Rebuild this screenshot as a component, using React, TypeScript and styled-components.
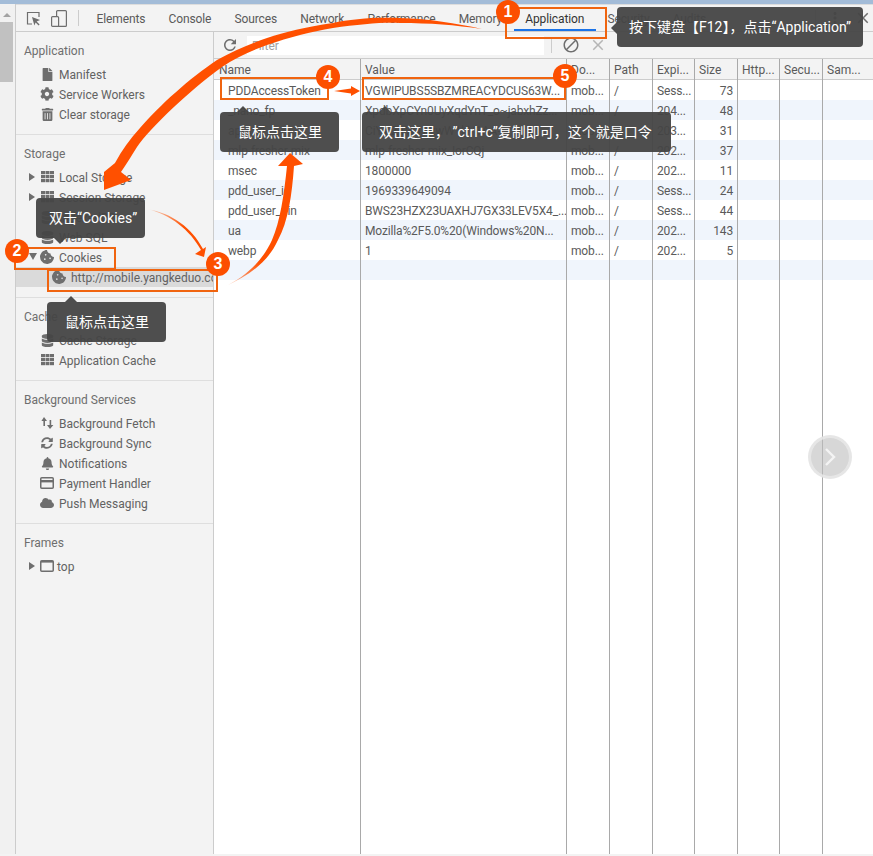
import React from "react";
import styled, { createGlobalStyle, css } from "styled-components";
import {
  FaBell,
  FaCloud,
  FaCog,
  FaCookieBite,
  FaDatabase,
  FaFile,
  FaSyncAlt,
  FaTrashAlt,
} from "react-icons/fa";
import { MdBlock, MdClose, MdMoreVert, MdRefresh } from "react-icons/md";

const GlobalStyle = createGlobalStyle`
  html, body {
    margin: 0;
    padding: 0;
    background: #f3f3f3;
    overflow: hidden;
  }
  * { box-sizing: border-box; }
`;

const Page = styled.div`
  position: relative;
  width: 873px;
  height: 856px;
  display: flex;
  flex-direction: column;
  background: #f3f3f3;
  font-family: Roboto, "Open Sans", sans-serif;
  font-size: 12px;
  color: #5a5a5a;
  overflow: hidden;
`;

const TitleStripe = styled.div`
  flex: 0 0 4px;
  background: #a3bcd8;
`;

const Body = styled.div`
  flex: 0 0 850px;
  display: flex;
`;

const Scrollbar = styled.div`
  flex: 0 0 15px;
  padding-top: 9px;
  background: #f1f1f1;
`;

const ScrollArrow = styled.div`
  width: 0;
  height: 0;
  margin: 0 0 5px 3px;
  border-left: 4px solid transparent;
  border-right: 4px solid transparent;
  border-bottom: 4px solid #a3a3a3;
`;

const ScrollThumb = styled.div`
  width: 13px;
  height: 60px;
  background: #c1c1c1;
`;

const Devtools = styled.div`
  flex: 1;
  min-width: 0;
  display: flex;
  flex-direction: column;
  border-left: 1px solid #cccccc;
`;

const Toolbar = styled.div`
  flex: 0 0 28px;
  display: flex;
  align-items: stretch;
  border-top: 1px solid #dddddd;
  border-bottom: 1px solid #cccccc;
  padding-left: 4px;
`;

const ToolIcon = styled.div`
  width: 26px;
  display: flex;
  align-items: center;
  justify-content: center;
  color: #6e6e6e;
`;

const ToolSeparator = styled.div<{ $left?: number; $right?: number }>`
  width: 1px;
  height: 16px;
  align-self: center;
  margin: 0 ${(p) => p.$right ?? 6}px 0 ${(p) => p.$left ?? 0}px;
  background: #cccccc;
`;

const Tab = styled.div<{ $active?: boolean }>`
  display: flex;
  align-items: center;
  padding: 2px 11.6px 0;
  white-space: nowrap;
  letter-spacing: -0.12px;
  color: ${(p) => (p.$active ? "#333333" : "#5a5a5a")};
  ${(p) =>
    p.$active &&
    css`
      box-shadow: inset 0 -2px 0 #1a73e8;
    `}
`;

const Tabs = styled.div`
  display: flex;
`;

const ToolbarRight = styled.div`
  margin-left: auto;
  display: flex;
  align-items: center;
  gap: 10px;
  padding-right: 1px;
  color: #6e6e6e;
`;

const Panels = styled.div`
  flex: 1;
  min-height: 0;
  display: flex;
`;

const Sidebar = styled.div`
  flex: 0 0 198px;
  min-width: 0;
  overflow: hidden;
  border-right: 1px solid #cccccc;
`;

const Section = styled.div<{ $last?: boolean }>`
  padding: 8px 0 10px;
  border-bottom: ${(p) => (p.$last ? "none" : "1px solid #dedede")};
`;

const SectionTitle = styled.div`
  height: 22px;
  line-height: 23px;
  margin: 0 0 2px 8px;
  color: #6e6e6e;
`;

const Item = styled.div<{ $child?: boolean; $selected?: boolean }>`
  height: 20px;
  display: flex;
  align-items: center;
  padding-left: ${(p) => (p.$child ? 25 : 13)}px;
  white-space: nowrap;
  overflow: hidden;
  color: #626262;
  background: ${(p) => (p.$selected ? "#dadada" : "transparent")};
`;

const Caret = styled.span<{ $state?: "open" | "closed" }>`
  flex: 0 0 11px;
  height: 10px;
  &::before {
    content: "";
    display: ${(p) => (p.$state ? "block" : "none")};
    width: 0;
    height: 0;
    margin-top: 1px;
    ${(p) =>
      p.$state === "open"
        ? css`
            border-left: 4px solid transparent;
            border-right: 4px solid transparent;
            border-top: 7px solid #6e6e6e;
          `
        : css`
            border-top: 4px solid transparent;
            border-bottom: 4px solid transparent;
            border-left: 6px solid #6e6e6e;
          `}
  }
`;

const ItemIcon = styled.span`
  flex: 0 0 14px;
  height: 14px;
  display: flex;
  align-items: center;
  justify-content: center;
  color: #6e6e6e;
`;

const ItemLabel = styled.span<{ $tight?: boolean }>`
  margin: 2px 0 0 ${(p) => (p.$tight ? 3 : 5)}px;
`;

const Content = styled.div`
  flex: 1;
  min-width: 0;
  display: flex;
  flex-direction: column;
  background: #ffffff;
`;

const FilterBar = styled.div`
  flex: 0 0 27px;
  display: flex;
  align-items: center;
  background: #f3f3f3;
  border-bottom: 1px solid #cccccc;
  padding-left: 7px;
  color: #6e6e6e;
`;

const FilterInput = styled.div`
  width: 297px;
  height: 19px;
  margin: 0 7px 0 8px;
  padding-left: 5px;
  line-height: 20px;
  background: #ffffff;
  color: #a0a0a0;
`;

const FilterSeparator = styled.div`
  width: 1px;
  height: 16px;
  margin-right: 10px;
  background: #cccccc;
`;

const ClearIcon = styled.span`
  display: flex;
  margin-left: 9px;
  color: #b5b5b5;
`;

const Table = styled.div`
  flex: 1;
  min-height: 0;
  display: flex;
`;

const Column = styled.div<{ $width: number; $last?: boolean }>`
  flex: 0 0 ${(p) => p.$width}px;
  min-width: 0;
  border-right: ${(p) => (p.$last ? "none" : "1px solid #a9a9a9")};
`;

const HeaderCell = styled.div<{ $pad: number }>`
  height: 21px;
  padding-left: ${(p) => p.$pad}px;
  line-height: 23px;
  background: #f3f3f3;
  border-bottom: 1px solid #cccccc;
  white-space: nowrap;
  overflow: hidden;
`;

const Cell = styled.div<{ $pad: number; $striped: boolean; $right?: boolean }>`
  height: 20px;
  padding: ${(p) => (p.$right ? "0 4px 0 0" : `0 0 0 ${p.$pad}px`)};
  line-height: 22px;
  letter-spacing: -0.15px;
  text-align: ${(p) => (p.$right ? "right" : "left")};
  background: ${(p) => (p.$striped ? "#f0f5fc" : "#ffffff")};
  white-space: nowrap;
  overflow: hidden;
`;

const ArrowLayer = styled.svg`
  position: absolute;
  inset: 0;
  pointer-events: none;
`;

const Frame = styled.div<{ $x: number; $y: number; $w: number; $h: number }>`
  position: absolute;
  left: ${(p) => p.$x}px;
  top: ${(p) => p.$y}px;
  width: ${(p) => p.$w}px;
  height: ${(p) => p.$h}px;
  border: 2px solid #f0640f;
`;

const Badge = styled.div<{ $x: number; $y: number }>`
  position: absolute;
  left: ${(p) => p.$x - 12}px;
  top: ${(p) => p.$y - 12}px;
  width: 24px;
  height: 24px;
  border-radius: 50%;
  background: #fc4f00;
  color: #ffffff;
  font-family: "Liberation Sans", sans-serif;
  font-size: 16px;
  font-weight: 700;
  line-height: 24px;
  text-align: center;
`;

const calloutFill = "rgba(68, 68, 68, 0.95)";

const Callout = styled.div<{
  $x: number;
  $y: number;
  $w: number;
  $pad: number;
  $beak: "left" | "top" | "bottom";
  $beakAt: number;
  $spaced?: boolean;
}>`
  position: absolute;
  left: ${(p) => p.$x}px;
  top: ${(p) => p.$y}px;
  width: ${(p) => p.$w}px;
  height: 40px;
  padding-left: ${(p) => p.$pad}px;
  border-radius: 4px;
  background: ${calloutFill};
  color: #ffffff;
  font-family: Roboto, "Noto Sans CJK SC", sans-serif;
  font-size: 14px;
  line-height: 40px;
  white-space: nowrap;
  text-spacing-trim: ${(p) => (p.$spaced ? "space-all" : "normal")};
  &::before {
    content: "";
    position: absolute;
    width: 0;
    height: 0;
    ${(p) =>
      p.$beak === "left"
        ? css`
            left: -6px;
            top: ${p.$beakAt}px;
            border-top: 6px solid transparent;
            border-bottom: 6px solid transparent;
            border-right: 6px solid ${calloutFill};
          `
        : p.$beak === "top"
          ? css`
              top: -6px;
              left: ${p.$beakAt}px;
              border-left: 6px solid transparent;
              border-right: 6px solid transparent;
              border-bottom: 6px solid ${calloutFill};
            `
          : css`
              bottom: -6px;
              left: ${p.$beakAt}px;
              border-left: 6px solid transparent;
              border-right: 6px solid transparent;
              border-top: 6px solid ${calloutFill};
            `}
  }
`;

const NextButton = styled.div`
  position: absolute;
  left: 808px;
  top: 435px;
  width: 44px;
  height: 44px;
  display: flex;
  align-items: center;
  justify-content: center;
  border-radius: 50%;
  background: rgba(190, 190, 190, 0.62);
  border: 3px solid rgba(235, 235, 235, 0.8);
`;

const GridIcon = () => (
  <svg width="13" height="12" viewBox="0 0 13 12" fill="#6e6e6e">
    {[0, 4.5, 9].map((x) =>
      [0, 4, 8].map((y) => <rect key={`${x}-${y}`} x={x} y={y} width="4" height="3.2" />)
    )}
  </svg>
);

const SwapIcon = () => (
  <svg width="13" height="14" viewBox="0 0 13 14" fill="#6e6e6e">
    <path d="M3 1 L6 5 L4 5 L4 10 L2.4 10 L2.4 5 L0.4 5 Z" />
    <path d="M9 13 L12.4 9 L10.2 9 L10.2 4 L8.6 4 L8.6 9 L6 9 Z" />
  </svg>
);

const CardIcon = () => (
  <svg width="14" height="12" viewBox="0 0 14 12" fill="none" stroke="#6e6e6e">
    <rect x="0.75" y="0.75" width="12.5" height="10.5" rx="1" strokeWidth="1.5" />
    <rect x="1" y="3" width="12" height="2.4" fill="#6e6e6e" stroke="none" />
  </svg>
);

const FrameIcon = () => (
  <svg width="14" height="12" viewBox="0 0 14 12" fill="none" stroke="#6e6e6e">
    <rect x="0.75" y="0.75" width="12.5" height="10.5" rx="1" strokeWidth="1.5" />
    <rect x="1" y="1" width="12" height="1.6" fill="#6e6e6e" stroke="none" />
  </svg>
);

const InspectIcon = () => (
  <svg width="15" height="15" viewBox="0 0 15 15" fill="none" stroke="#6e6e6e">
    <path d="M6 13 H1.5 V1.5 H13 V6" strokeWidth="1.2" />
    <path d="M6 6 L14 9 L10.6 10.6 L13.6 13.6 L12.6 14.6 L9.6 11.6 L8.4 14.6 Z" fill="#6e6e6e" stroke="none" />
  </svg>
);

const DeviceIcon = () => (
  <svg width="16" height="17" viewBox="0 0 16 17" fill="none" stroke="#6e6e6e" strokeWidth="1.2">
    <rect x="5.6" y="0.6" width="9.8" height="15.8" rx="1" />
    <rect x="0.6" y="6.6" width="7" height="9.8" rx="1" fill="#f3f3f3" />
  </svg>
);

type SideEntry = {
  label: string;
  icon: React.ReactNode;
  caret?: "open" | "closed";
};

const sections: { title: string; entries: SideEntry[] }[] = [
  {
    title: "Application",
    entries: [
      { label: "Manifest", icon: <FaFile size={13} /> },
      { label: "Service Workers", icon: <FaCog size={14} /> },
      { label: "Clear storage", icon: <FaTrashAlt size={13} /> },
    ],
  },
  {
    title: "Storage",
    entries: [
      { label: "Local Storage", icon: <GridIcon />, caret: "closed" },
      { label: "Session Storage", icon: <GridIcon />, caret: "closed" },
      { label: "IndexedDB", icon: <FaDatabase size={13} /> },
      { label: "Web SQL", icon: <FaDatabase size={13} /> },
      { label: "Cookies", icon: <FaCookieBite size={14} />, caret: "open" },
    ],
  },
  {
    title: "Cache",
    entries: [
      { label: "Cache Storage", icon: <FaDatabase size={13} /> },
      { label: "Application Cache", icon: <GridIcon /> },
    ],
  },
  {
    title: "Background Services",
    entries: [
      { label: "Background Fetch", icon: <SwapIcon /> },
      { label: "Background Sync", icon: <FaSyncAlt size={12} /> },
      { label: "Notifications", icon: <FaBell size={13} /> },
      { label: "Payment Handler", icon: <CardIcon /> },
      { label: "Push Messaging", icon: <FaCloud size={14} /> },
    ],
  },
];

const tabs = ["Elements", "Console", "Sources", "Network", "Performance", "Memory", "Application", "Security", "Audits"];

const columns = [
  {
    title: "Name",
    width: 147,
    pad: 5,
    cellPad: 14,
    cells: ["PDDAccessToken", "_nano_fp", "api_uid", "mlp-fresher-mix", "msec", "pdd_user_id", "pdd_user_uin", "ua", "webp"],
  },
  {
    title: "Value",
    width: 206,
    pad: 4,
    cellPad: 4,
    cells: [
      "VGWIPUBS5SBZMREACYDCUS63W...",
      "XpdbXpCYn0UyXqdYnT_o~jabxhZz...",
      "CiYwZ1W1XzwW1hV1AA==",
      "mlp-fresher-mix_IorCQj",
      "1800000",
      "1969339649094",
      "BWS23HZX23UAXHJ7GX33LEV5X4_...",
      "Mozilla%2F5.0%20(Windows%20N...",
      "1",
    ],
  },
  { title: "Do...", width: 43, pad: 4, cellPad: 4, cells: Array(9).fill("mob...") },
  { title: "Path", width: 43, pad: 4, cellPad: 4, cells: Array(9).fill("/") },
  {
    title: "Expi...",
    width: 42,
    pad: 4,
    cellPad: 4,
    cells: ["Sess...", "204...", "203...", "202...", "202...", "Sess...", "Sess...", "202...", "202..."],
  },
  {
    title: "Size",
    width: 43,
    pad: 4,
    cellPad: 4,
    right: true,
    cells: ["73", "48", "31", "37", "11", "24", "44", "143", "5"],
  },
  { title: "Http...", width: 42, pad: 4, cellPad: 4, cells: [] as string[] },
  { title: "Secu...", width: 43, pad: 4, cellPad: 4, cells: [] as string[] },
  { title: "Sam...", width: 50, pad: 4, cellPad: 4, cells: [] as string[] },
];

const ROW_COUNT = 10;

const Arrows = () => (
  <ArrowLayer width="873" height="856" viewBox="0 0 873 856">
    <defs>
      <linearGradient id="thinFade" x1="147" y1="209" x2="200" y2="250" gradientUnits="userSpaceOnUse">
        <stop offset="0" stopColor="#ff5000" stopOpacity="0.15" />
        <stop offset="0.6" stopColor="#ff5000" />
      </linearGradient>
      <linearGradient id="tailFade" x1="222" y1="288" x2="270" y2="245" gradientUnits="userSpaceOnUse">
        <stop offset="0" stopColor="#ff5000" stopOpacity="0.2" />
        <stop offset="0.7" stopColor="#ff5000" />
      </linearGradient>
    </defs>
    <path
      fill="#ff5000"
      d="M482 29 C455 23 430 19 400 18 C375 17 350 19 333 23 C305 27 285 32 267 38 C250 44 233 51 217 60 C190 78 160 105 140 128 C130 139 122 150 115 163 L104 172 L104 190 L131 180 L121 172 C127 163 132 155 137 147 C150 128 190 90 222 67 C235 58 250 51 267 45 C290 37 310 32 333 28 C360 24 385 22 400 23 C430 23 455 25 482 29 Z"
    />
    <path
      fill="url(#thinFade)"
      d="M147 209 C170 214 190 230 201 250 L195 254 L204 257 L206 247 L203 249 C192 228 172 213 147 209 Z"
    />
    <path
      fill="url(#tailFade)"
      d="M224 287 C245 277 262 262 272 240 C280 222 284 195 287 166 L278 166 L290 153 L303 164 L294 166 C292 195 288 222 278 240 C268 262 250 275 224 287 Z"
    />
    <path fill="#ff5000" d="M334 91 L351 88.5 L351 86 L360 91 L351 96 L351 93.5 Z" />
  </ArrowLayer>
);

const App = () => {
  return (
    <Page>
      <GlobalStyle />
      <TitleStripe />
      <Body>
        <Scrollbar>
          <ScrollArrow />
          <ScrollThumb />
        </Scrollbar>
        <Devtools>
          <Toolbar>
            <ToolIcon>
              <InspectIcon />
            </ToolIcon>
            <ToolIcon>
              <DeviceIcon />
            </ToolIcon>
            <ToolSeparator $left={6} />
            <Tabs>
              {tabs.map((t) => (
                <Tab key={t} $active={t === "Application"}>
                  {t}
                </Tab>
              ))}
            </Tabs>
            <ToolbarRight>
              <ToolSeparator $right={0} />
              <MdMoreVert size={18} />
              <MdClose size={18} />
            </ToolbarRight>
          </Toolbar>
          <Panels>
            <Sidebar>
              {sections.map((s) => (
                <Section key={s.title}>
                  <SectionTitle>{s.title}</SectionTitle>
                  {s.entries.map((e) => (
                    <Item key={e.label}>
                      <Caret $state={e.caret} />
                      <ItemIcon>{e.icon}</ItemIcon>
                      <ItemLabel>{e.label}</ItemLabel>
                    </Item>
                  ))}
                  {s.title === "Storage" && (
                    <Item $child $selected>
                      <Caret />
                      <ItemIcon>
                        <FaCookieBite size={14} />
                      </ItemIcon>
                      <ItemLabel>http://mobile.yangkeduo.com</ItemLabel>
                    </Item>
                  )}
                </Section>
              ))}
              <Section $last>
                <SectionTitle>Frames</SectionTitle>
                <Item>
                  <Caret $state="closed" />
                  <ItemIcon>
                    <FrameIcon />
                  </ItemIcon>
                  <ItemLabel $tight>top</ItemLabel>
                </Item>
              </Section>
            </Sidebar>
            <Content>
              <FilterBar>
                <MdRefresh size={18} />
                <FilterInput>Filter</FilterInput>
                <FilterSeparator />
                <MdBlock size={18} />
                <ClearIcon>
                  <MdClose size={18} />
                </ClearIcon>
              </FilterBar>
              <Table>
                {columns.map((c, i) => (
                  <Column key={c.title} $width={c.width} $last={i === columns.length - 1}>
                    <HeaderCell $pad={c.pad}>{c.title}</HeaderCell>
                    {Array.from({ length: ROW_COUNT }, (_, r) => (
                      <Cell key={r} $pad={c.cellPad} $striped={r % 2 === 1} $right={c.right}>
                        {c.cells[r] ?? ""}
                      </Cell>
                    ))}
                  </Column>
                ))}
              </Table>
            </Content>
          </Panels>
        </Devtools>
      </Body>

      <NextButton>
        <svg width="12" height="20" viewBox="0 0 12 20" fill="none" stroke="#f4f4f4" strokeWidth="2.4">
          <path d="M2 2 L10 10 L2 18" />
        </svg>
      </NextButton>

      <Callout $x={617} $y={7} $w={246} $pad={12} $beak="left" $beakAt={15}>
        按下键盘【F12】，点击“Application”
      </Callout>
      <Callout $x={36} $y={198} $w={109} $pad={13} $beak="bottom" $beakAt={18}>
        双击“Cookies”
      </Callout>
      <Callout $x={47} $y={302} $w={119} $pad={18} $beak="top" $beakAt={18}>
        鼠标点击这里
      </Callout>
      <Callout $x={220} $y={112} $w={119} $pad={18} $beak="top" $beakAt={17}>
        鼠标点击这里
      </Callout>
      <Callout $x={362} $y={112} $w={309} $pad={17} $beak="top" $beakAt={17} $spaced>
        双击这里， ”ctrl+c”复制即可，这个就是口令
      </Callout>

      <Arrows />

      <Frame $x={505} $y={7} $w={102} $h={32} />
      <Frame $x={14} $y={247} $w={102} $h={23} />
      <Frame $x={47} $y={269} $w={171} $h={23} />
      <Frame $x={220} $y={77} $w={109} $h={23} />
      <Frame $x={362} $y={77} $w={204} $h={23} />

      <Badge $x={508} $y={12}>1</Badge>
      <Badge $x={17} $y={251}>2</Badge>
      <Badge $x={218} $y={264}>3</Badge>
      <Badge $x={328} $y={77}>4</Badge>
      <Badge $x={565} $y={76}>5</Badge>
    </Page>
  );
};

export default App;
